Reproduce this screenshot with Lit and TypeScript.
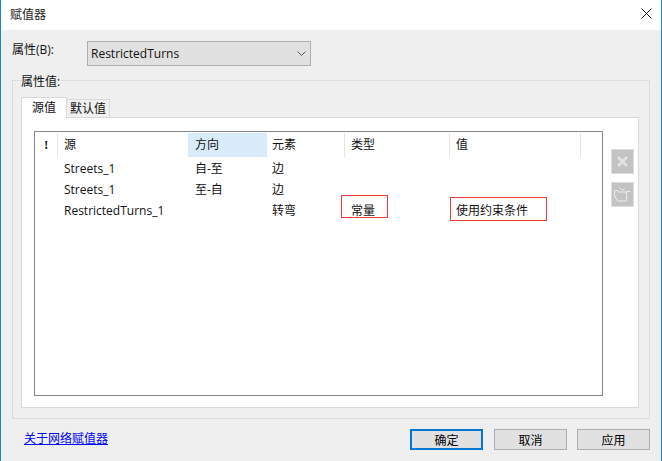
import { LitElement, html, css } from "lit";
import { customElement } from "lit/decorators.js";

const rows = [
  { src: "Streets_1", dir: "自-至", el: "边", type: "", val: "" },
  { src: "Streets_1", dir: "至-自", el: "边", type: "", val: "" },
  { src: "RestrictedTurns_1", dir: "", el: "转弯", type: "常量", val: "使用约束条件" },
];

@customElement("app-root")
export class AppRoot extends LitElement {
  static styles = css`
    :host {
      display: block;
      width: 662px;
      height: 461px;
      box-sizing: border-box;
      background: #efefef;
      border-left: 1px solid #1783d9;
      border-right: 1px solid #1783d9;
      font-family: "Open Sans", "Noto Sans CJK SC", sans-serif;
      font-size: 12px;
      color: #111;
      overflow: hidden;
    }
    .title {
      height: 30px;
      box-sizing: border-box;
      background: #fff;
      display: flex;
      align-items: center;
      justify-content: space-between;
      padding: 0 9px 2px 9px;
      color: #222;
    }
    .title svg { display: block; margin-bottom: 1px; }
    .body { padding: 11px 11px 0; display: flex; flex-direction: column; }
    .prop { display: flex; height: 25px; }
    .prop label { width: 75px; line-height: 18px; }
    .select {
      width: 224px;
      box-sizing: border-box;
      background: #e1e1e1;
      border: 1px solid #adadad;
      display: flex;
      align-items: center;
      justify-content: space-between;
      padding: 0 4px 0 3px;
    }
    .group {
      margin-top: 14px;
      height: 339px;
      box-sizing: border-box;
      border: 1px solid #dcdcdc;
      padding: 0 10px 10px 8px;
      display: flex;
      flex-direction: column;
    }
    .legend {
      margin-top: -9px;
      height: 17px;
      line-height: 19px;
      width: fit-content;
      padding: 0 1px 0 0;
      background: #efefef;
      font-size: 12px;
    }
    .tabs { display: flex; align-items: flex-end; height: 20px; margin-top: 8px; position: relative; z-index: 1; }
    .tab {
      box-sizing: border-box;
      border: 1px solid #d9d9d9;
      border-bottom: none;
      text-align: center;
    }
    .tab.active { width: 46px; height: 21px; background: #fff; line-height: 19px; margin-bottom: -1px; }
    .tab.idle { width: 44px; margin-left: -1px; height: 18px; background: #f0f0f0; line-height: 18px; }
    .panel {
      flex: 1;
      min-height: 0;
      background: #fff;
      border: 1px solid #d9d9d9;
      padding: 13px 4px 11px 12px;
      display: flex;
      gap: 8px;
    }
    .list {
      width: 569px;
      box-sizing: border-box;
      border: 1px solid #828790;
      padding-top: 1px;
    }
    .grid {
      display: grid;
      grid-template-columns: 23px 130px 79px 78px 105px 131px;
    }
    .head { height: 24px; line-height: 24px; }
    .head > div { box-sizing: border-box; padding-left: 6px; }
    .sep { border-right: 1px solid #e5e5e5; }
    .head .sorted { background: #d9ebf9; padding-left: 7px; }
    .head .sorted + div { padding-left: 5px; }
    .head .mark {
      padding-left: 9px;
      font-weight: 700;
      font-size: 13px;
      font-family: "Liberation Serif", serif;
    }
    .row { height: 21px; line-height: 21px; }
    .row > div { position: relative; padding-left: 6px; white-space: nowrap; }
    .row .dir { padding-left: 7px; }
    .row .el { padding-left: 5px; }
    .rows { padding-top: 1px; }
    .flag { position: absolute; box-sizing: border-box; border: 1px solid #f23a3a; }
    .flag.a { left: -4px; top: -5px; width: 47px; height: 23px; }
    .flag.b { left: 0; top: -3px; width: 97px; height: 24px; }
    .side { display: flex; flex-direction: column; gap: 8px; padding-top: 18px; }
    .side div {
      width: 23px;
      height: 25px;
      box-sizing: border-box;
      background: #c3c3c3;
      border: 1px solid #dedede;
      display: flex;
      align-items: center;
      justify-content: center;
    }
    .footer {
      margin-top: 10px;
      height: 21px;
      display: flex;
      align-items: center;
      justify-content: space-between;
    }
    .footer a { margin-left: 12px; color: #0000ff; text-decoration: underline; margin-bottom: 4px; }
    .btns { display: flex; gap: 10px; }
    .btn {
      width: 73px;
      height: 21px;
      box-sizing: border-box;
      background: #e1e1e1;
      border: 1px solid #adadad;
      display: flex;
      align-items: center;
      justify-content: center;
      color: #000;
    }
    .btn.primary { border: 2px solid #0078d7; margin-right: 1px; }
  `;

  render() {
    return html`
      <div class="title">
        <span>赋值器</span>
        <svg width="11" height="11" viewBox="0 0 11 11"><path d="M.5.5l10 10M10.500.5l-10 10" stroke="#111" fill="none" /></svg>
      </div>
      <div class="body">
        <div class="prop">
          <label>属性(B):</label>
          <div class="select">
            <span>RestrictedTurns</span>
            <svg width="9" height="6" viewBox="0 0 9 6"><path d="M.5.5l4 4 4-4" stroke="#555" fill="none" /></svg>
          </div>
        </div>
        <div class="group">
          <div class="legend">属性值:</div>
          <div class="tabs">
            <div class="tab active">源值</div>
            <div class="tab idle">默认值</div>
          </div>
          <div class="panel">
            <div class="list">
              <div class="grid head">
                <div class="mark sep">!</div>
                <div>源</div>
                <div class="sorted">方向</div>
                <div class="sep">元素</div>
                <div class="sep">类型</div>
                <div class="sep">值</div>
              </div>
              <div class="rows">
                ${rows.map(
                  (r) => html`
                    <div class="grid row">
                      <div></div>
                      <div>${r.src}</div>
                      <div class="dir">${r.dir}</div>
                      <div class="el">${r.el}</div>
                      <div>${r.type}${r.type ? html`<span class="flag a"></span>` : ""}</div>
                      <div>${r.val}${r.val ? html`<span class="flag b"></span>` : ""}</div>
                    </div>
                  `
                )}
              </div>
            </div>
            <div class="side">
              <div>
                <svg width="13" height="13" viewBox="0 0 13 13"><path d="M2 2l9 9M11 2l-9 9" stroke="#e4e4e4" stroke-width="2.500" fill="none" /></svg>
              </div>
              <div>
                <svg width="19" height="17" viewBox="0 0 19 17"><path d="M1.500 4.500v5l3 5.500h9V5.500h4" stroke="#ececec" fill="none" /><path d="M1.500 4.500h3l1 1.500h8M6.500 1.500l3 3 2-2" stroke="#ececec" fill="none" /></svg>
              </div>
            </div>
          </div>
        </div>
        <div class="footer">
          <a href="#">关于网络赋值器</a>
          <div class="btns">
            <div class="btn primary">确定</div>
            <div class="btn">取消</div>
            <div class="btn">应用</div>
          </div>
        </div>
      </div>
    `;
  }
}
